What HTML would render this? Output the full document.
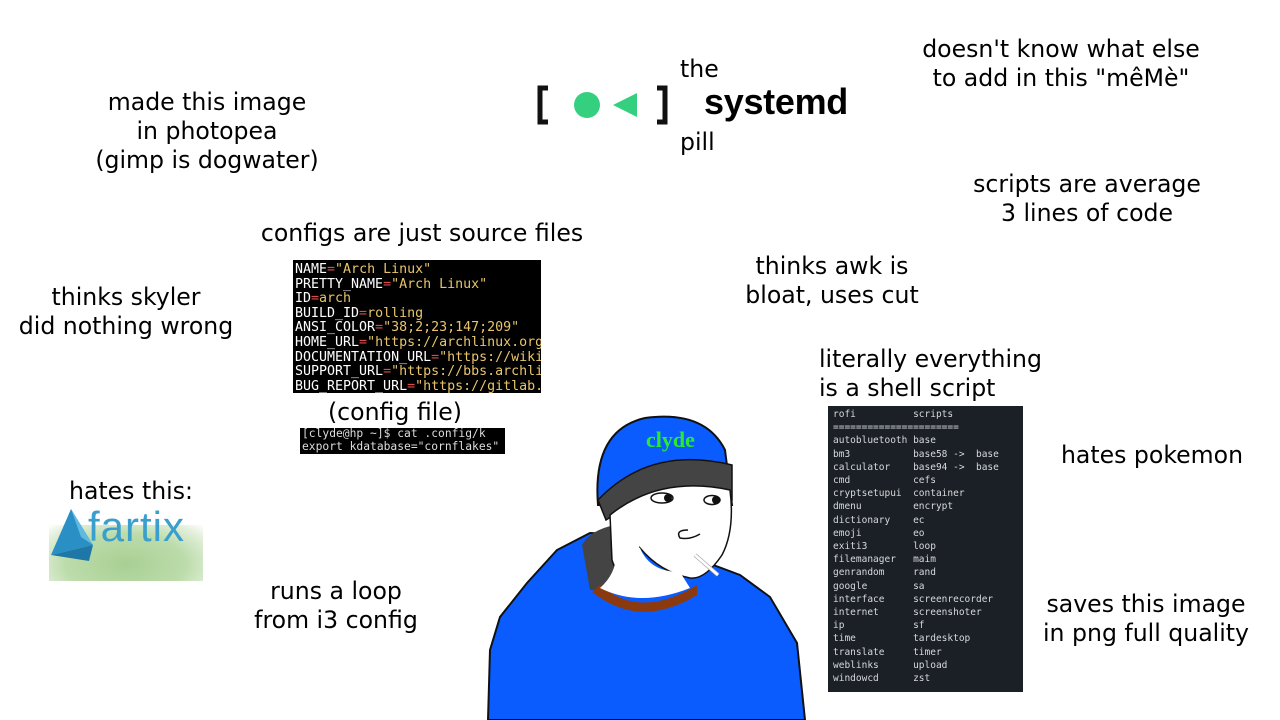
<!DOCTYPE html>
<html><head><meta charset="utf-8"><style>
html,body{margin:0;padding:0;background:#fff;}
body{width:1280px;height:720px;position:relative;overflow:hidden;font-family:"DejaVu Sans","Liberation Sans",sans-serif;color:#000;}
.t{position:absolute;font-size:23.6px;line-height:29px;text-align:center;white-space:nowrap;}
.mono{font-family:"DejaVu Sans Mono","Liberation Mono",monospace;}
#cfg{position:absolute;left:293px;top:260px;width:248px;height:133px;background:#000;overflow:hidden;font-size:13.3px;line-height:14.6px;color:#fff;padding:3px 0 0 2px;box-sizing:border-box;white-space:pre;}
.r{color:#e04a4a}.y{color:#e8c56a}
#sm{position:absolute;left:300px;top:428px;width:205px;height:26px;background:#000;color:#ddd;font-size:11.3px;line-height:12.5px;white-space:pre;padding-left:2px;box-sizing:border-box;overflow:hidden}
#ls{position:absolute;left:828px;top:406px;width:195px;height:286px;background:#1b2026;color:#d6d9dc;font-size:9.5px;line-height:13.2px;white-space:pre;padding:2px 0 0 5px;box-sizing:border-box;}
</style></head><body>
<div class="t" style="left:57px;width:300px;top:88px">made this image<br>in photopea<br>(gimp is dogwater)</div>
<div class="t" style="left:911px;width:300px;top:35px">doesn't know what else<br>to add in this "mêMè"</div>
<div class="t" style="left:937px;width:300px;top:170px">scripts are average<br>3 lines of code</div>
<div class="t" style="left:222px;width:400px;top:219px">configs are just source files</div>
<div class="t" style="left:-24px;width:300px;top:283px">thinks skyler<br>did nothing wrong</div>
<div class="t" style="left:682px;width:300px;top:252px">thinks awk is<br>bloat, uses cut</div>
<div class="t" style="left:819px;top:345px;text-align:left">literally everything<br>is a shell script</div>
<div class="t" style="left:1002px;width:300px;top:441px">hates pokemon</div>
<div class="t" style="left:-19px;width:300px;top:477px">hates this:</div>
<div class="t" style="left:186px;width:300px;top:577px">runs a loop<br>from i3 config</div>
<div class="t" style="left:996px;width:300px;top:590px">saves this image<br>in png full quality</div>
<div class="t" style="left:245px;width:300px;top:398px">(config file)</div>

<svg style="position:absolute;left:530px;top:80px" width="150" height="50">
<path d="M18 8 H10 V42 H18" fill="none" stroke="#111" stroke-width="5"/>
<circle cx="57" cy="25" r="13" fill="#35d07f"/>
<polygon points="83,25 107,13 107,37" fill="#35d07f"/>
<path d="M127 8 H135 V42 H127" fill="none" stroke="#111" stroke-width="5"/>
</svg>
<div class="t" style="left:680px;top:55px;text-align:left">the</div>
<div class="t" style="left:680px;top:128px;text-align:left">pill</div>
<div style="position:absolute;left:704px;top:80px;font-size:36px;font-weight:bold;line-height:44px;font-family:'Liberation Sans',sans-serif;letter-spacing:-0.3px">systemd</div>

<div id="cfg" class="mono">NAME<span class="r">=</span><span class="y">"Arch Linux"</span>
PRETTY_NAME<span class="r">=</span><span class="y">"Arch Linux"</span>
ID<span class="r">=</span><span class="y">arch</span>
BUILD_ID<span class="r">=</span><span class="y">rolling</span>
ANSI_COLOR<span class="r">=</span><span class="y">"38;2;23;147;209"</span>
HOME_URL<span class="r">=</span><span class="y">"https://archlinux.org</span>
DOCUMENTATION_URL<span class="r">=</span><span class="y">"https://wiki</span>
SUPPORT_URL<span class="r">=</span><span class="y">"https://bbs.archli</span>
BUG_REPORT_URL<span class="r">=</span><span class="y">"https://gitlab.</span></div>
<div id="sm" class="mono">[clyde@hp ~]$ cat .config/k
export kdatabase="cornflakes"</div>

<div id="ls" class="mono">rofi          scripts
======================
autobluetooth base
bm3           base58 ->  base
calculator    base94 ->  base
cmd           cefs
cryptsetupui  container
dmenu         encrypt
dictionary    ec
emoji         eo
exiti3        loop
filemanager   maim
genrandom     rand
google        sa
interface     screenrecorder
internet      screenshoter
ip            sf
time          tardesktop
translate     timer
weblinks      upload
windowcd      zst</div>

<div style="position:absolute;left:49px;top:525px;width:154px;height:56px;background:radial-gradient(ellipse at 50% 70%,#a9cf93 0%,#bcdcab 55%,#e4f0dc 85%,#fff 100%);"></div>
<svg style="position:absolute;left:49px;top:505px" width="60" height="60">
<polygon points="22,4 44,40 2,50" fill="#2a8fc4"/>
<polygon points="22,4 44,40 32,32" fill="#62b9e0"/>
<polygon points="2,50 44,40 40,56" fill="#1f77a8"/>
</svg>
<div style="position:absolute;left:88px;top:503px;font-size:42px;color:#3a9fcc;font-family:'Liberation Sans',sans-serif;letter-spacing:1px">fartix</div>

<svg style="position:absolute;left:480px;top:410px" width="330" height="310" viewBox="480 410 330 310">
<path d="M488 720 L490 650 L500 617 L527 583 L557 550 L590 533 L640 535 L700 560 L740 575 L770 597 L797 643 L805 720 Z" fill="#0a5cff" stroke="#111" stroke-width="2"/>
<path d="M582 545 Q590 530 615 525 L625 590 L590 590 Z" fill="#444"/>
<path d="M598 505 Q592 430 645 418 Q705 410 725 450 L732 505 Z" fill="#0a5cff" stroke="#111" stroke-width="2"/>
<path d="M598 500 Q650 445 732 465 L732 500 Q670 478 606 520 Z" fill="#444" stroke="#111" stroke-width="1.5"/>
<text x="646" y="447" font-family="'Liberation Serif',serif" font-weight="bold" font-size="22" fill="#2bea2b">clyde</text>
<path d="M610 515 Q660 475 730 490 Q735 530 722 555 Q705 580 690 578 Q660 572 640 548 L640 575 Q620 585 612 560 Z" fill="#fff" stroke="#111" stroke-width="1.5"/>
<path d="M600 585 Q640 620 697 585 L697 595 Q640 630 592 592 Z" fill="#8b3a10"/>
<path d="M615 545 Q620 570 600 588 Q640 608 690 588 L680 572 Q650 572 640 548 Z" fill="#fff"/>
<ellipse cx="662" cy="498" rx="11" ry="5" fill="#fff" stroke="#111" stroke-width="1.5"/>
<circle cx="668" cy="498" r="4" fill="#111"/>
<ellipse cx="712" cy="500" rx="8" ry="4.5" fill="#fff" stroke="#111" stroke-width="1.5"/>
<circle cx="716" cy="500" r="4" fill="#111"/>
<path d="M688 530 Q675 530 680 538 Q690 540 700 534" fill="none" stroke="#111" stroke-width="1.5"/>
<path d="M695 555 L718 575" stroke="#aaa" stroke-width="4"/>
<path d="M695 555 L718 575" stroke="#fff" stroke-width="2.5"/>
</svg>
</body></html>
